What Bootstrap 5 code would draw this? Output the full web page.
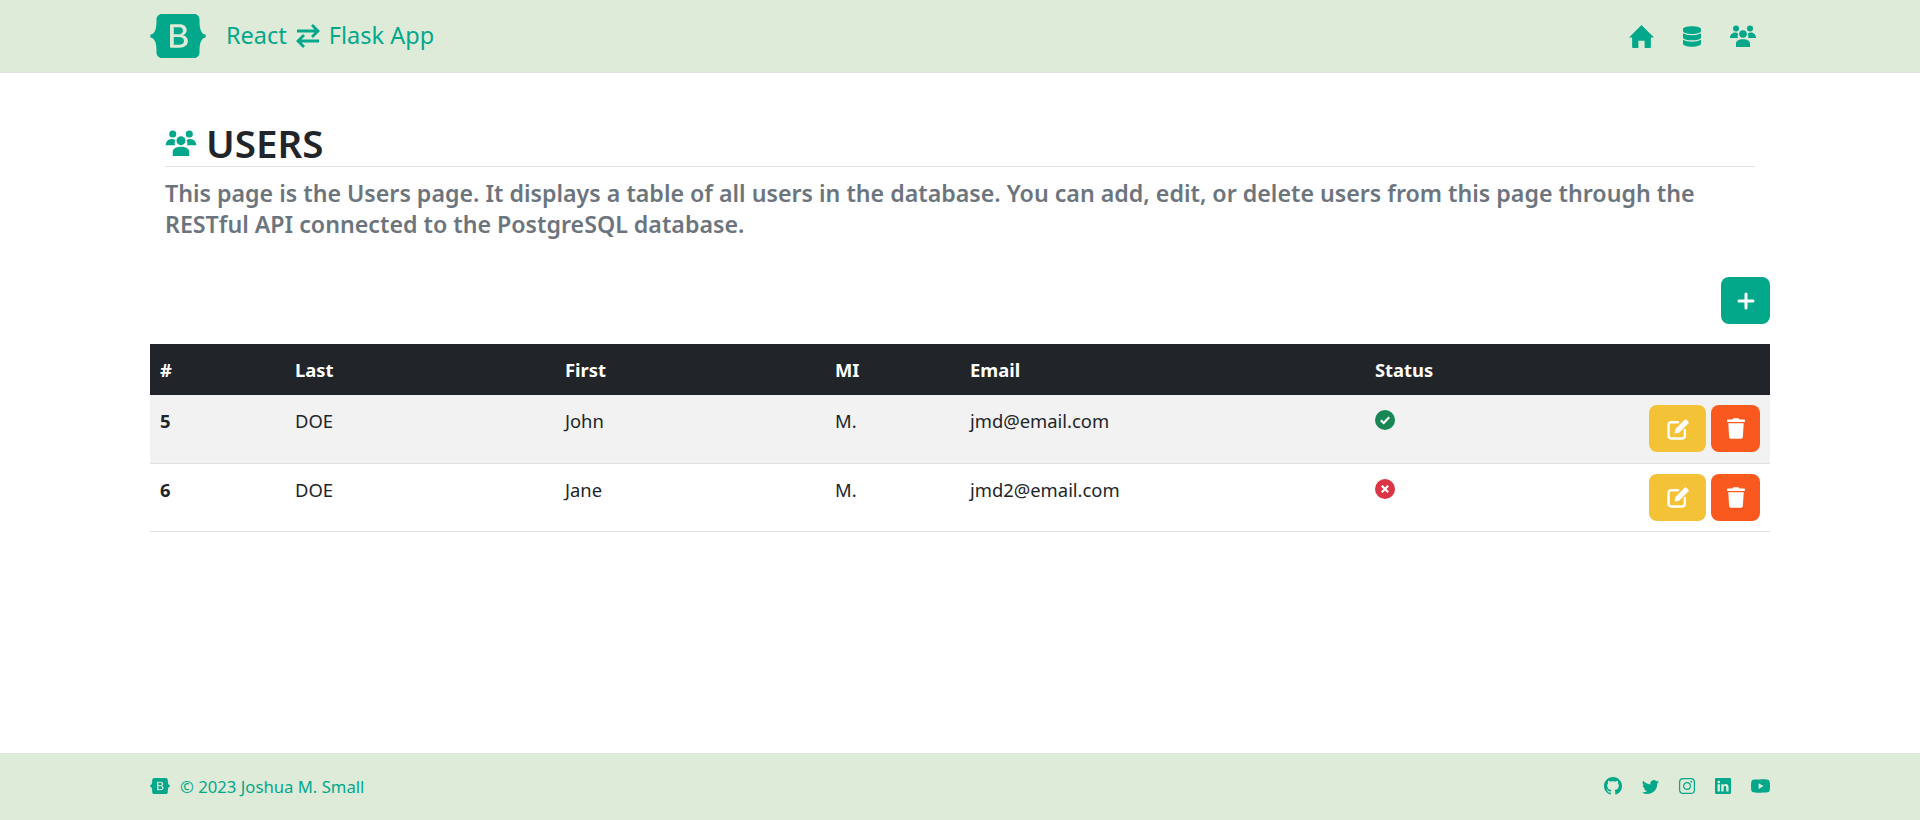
<!DOCTYPE html>
<html lang="en">
<head>
    <meta charset="UTF-8">
    <meta name="viewport" content="width=device-width, initial-scale=1.0">
    <title>React Flask App</title>
    <link href="https://cdn.jsdelivr.net/npm/bootstrap@5.3.0/dist/css/bootstrap.min.css" rel="stylesheet">
    <style>
        body {
            font-family: "Noto Sans", "Open Sans", sans-serif;
            color: #212529;
            min-height: 820px;
            display: flex;
            flex-direction: column;
        }
        .page-wrap {
            width: 1620px;
            margin: 0 auto;
        }
        .top-bar {
            background-color: #deebd9;
            border-bottom: 1px solid #dee2e6;
            height: 73px;
            padding: 0;
        }
        .brand-link {
            color: #03a88a;
            font-size: 23.5px;
            font-weight: 400;
            text-decoration: none;
            gap: 20px;
        }
        .brand-link:hover { color: #03a88a; }
        .brand-link svg.logo { width: 56px; height: 44px; }
        .swap-icon { width: 26px; height: 26px; margin: 0 8px; vertical-align: -5px; }
        .nav-icons { gap: 29px; padding-right: 14px; }
        .nav-icons a { color: #03a88a; display: block; line-height: 0; }
        .nav-ico-home { width: 25px; height: 23px; }
        .nav-ico-db { width: 18px; height: 21px; }
        .nav-ico-people { width: 26px; height: 22px; }
        .intro-block { padding: 47px 15px 0; }
        .users-title {
            font-size: 38.5px;
            font-weight: 600;
            line-height: 1.2;
            margin: 0;
            padding-bottom: 0;
            border-bottom: 1px solid #dee2e6;
            gap: 9px;
        }
        .users-title svg { width: 32px; height: 26px; color: #03a88a; }
        .intro-text {
            font-size: 23.2px;
            font-weight: 600;
            line-height: 31px;
            color: #6c757d;
            margin: 11px 0 0;
        }
        .add-row { margin-top: 37px; margin-bottom: 20px; }
        .icon-btn {
            border: 0;
            border-radius: 8px;
            height: 47px;
            color: #fff;
            padding: 0;
            display: inline-flex;
            align-items: center;
            justify-content: center;
        }
        .btn-add { background-color: #03a88a; width: 49px; }
        .btn-add svg { width: 20px; height: 20px; }
        .btn-edit { background-color: #f3c236; width: 57px; }
        .btn-edit svg { width: 22px; height: 22px; }
        .btn-del { background-color: #f9591f; width: 49px; }
        .btn-del svg { width: 18px; height: 21px; }
        .action-btns { gap: 5px; }
        .users-table { table-layout: fixed; margin: 0; }
        .users-table th, .users-table td { padding: 12px 10px 10px; font-size: 18.4px; line-height: 27px; }
        .users-table thead th {
            background-color: #212529;
            color: #fff;
            font-weight: 700;
            height: 51px;
            padding: 0 10px;
            border: 0;
            vertical-align: middle;
        }
        .users-table tbody tr.shade > * { background-color: #f2f2f2; }
        .users-table tbody td, .users-table tbody th { height: 68px; vertical-align: top; border-color: #dee2e6; }
        .users-table tbody th { font-weight: 700; }
        .users-table tbody td.status-cell { padding-top: 10px; }
        .status-ico { width: 20px; height: 20px; display: block; margin-top: 5px; }
        .site-foot {
            background-color: #deebd9;
            height: 67px;
            margin-top: auto;
            color: #03a88a;
            font-size: 16.7px;
        }
        .site-foot svg.logo { width: 20px; height: 16px; }
        .foot-brand { gap: 10px; }
        .foot-links { gap: 20px; }
        .foot-links a { color: #03a88a; line-height: 0; display: block; }
        .ico-gh { width: 18px; height: 18px; }
        .ico-tw { width: 17px; height: 17px; }
        .ico-ig, .ico-li { width: 16px; height: 16px; }
        .ico-yt { width: 19px; height: 19px; }
    </style>
</head>
<body>
    <svg width="0" height="0" class="d-none">
        <symbol id="bs-logo" viewBox="0 0 118 94"><path fill="currentColor" fill-rule="evenodd" d="M24.509 0c-6.733 0-11.715 5.893-11.492 12.284.214 6.14-.064 14.092-2.066 20.577C8.943 39.365 5.547 43.485 0 44.014v5.972c5.547.529 8.943 4.649 10.951 11.153 2.002 6.485 2.28 14.437 2.066 20.577C12.794 88.106 17.776 94 24.51 94H93.5c6.733 0 11.714-5.893 11.491-12.284-.214-6.14.064-14.092 2.066-20.577 2.009-6.504 5.396-10.624 10.943-11.153v-5.972c-5.547-.529-8.934-4.649-10.943-11.153-2.002-6.484-2.28-14.437-2.066-20.577C105.214 5.894 100.233 0 93.5 0H24.508zM80 57.863C80 66.663 73.436 72 62.543 72H44a2 2 0 01-2-2V24a2 2 0 012-2h18.437c9.083 0 15.044 4.92 15.044 12.474 0 5.302-4.01 10.049-9.119 10.88v.277C75.317 46.394 80 51.21 80 57.863zM60.521 28.34H49.948v14.934h8.905c6.884 0 10.68-2.772 10.68-7.727 0-4.643-3.264-7.207-8.012-7.207zM49.948 49.2v16.458H60.91c7.167 0 10.964-2.876 10.964-8.281 0-5.406-3.903-8.178-11.425-8.178H49.948z"/></symbol>
        <symbol id="people" viewBox="0 0 26 22"><g fill="currentColor"><circle cx="6" cy="3.4" r="3"/><circle cx="20" cy="3.4" r="3"/><circle cx="13" cy="9" r="3.8"/><path d="M0 13c0-3 2.4-5.4 5-5.4 1.300 0 2.400.4 3.300 1.200-.5.900-.8 1.900-.7 3 .1.500.2.900.4 1.200H0zM26 13c0-3-2.400-5.400-5-5.400-1.300 0-2.400.4-3.300 1.200.5.900.8 1.900.7 3-.1.500-.2.900-.4 1.200H26zM6 22v-3.500c0-2.500 2.500-4.300 7-4.300s7 1.800 7 4.300V22H6z"/></g></symbol>
        <symbol id="pen-box" viewBox="0 0 21 21"><path fill="none" stroke="currentColor" stroke-width="2.300" stroke-linecap="round" d="M10.500 4H4a2.500 2.500 0 0 0-2.500 2.500V17A2.500 2.500 0 0 0 4 19.500h10.500A2.500 2.500 0 0 0 17 17v-5.500"/><path fill="currentColor" d="M7.200 14.800l.8-4.300L16.600 1.900a1.700 1.700 0 0 1 2.400 0l1.100 1.100a1.700 1.700 0 0 1 0 2.400L11.500 14z"/></symbol>
        <symbol id="bin" viewBox="0 0 448 512"><path fill="currentColor" d="M432 32H312l-9.400-18.700A24 24 0 0 0 281.100 0H166.800a23.720 23.720 0 0 0-21.400 13.300L136 32H16A16 16 0 0 0 0 48v32a16 16 0 0 0 16 16h416a16 16 0 0 0 16-16V48a16 16 0 0 0-16-16zM53.200 467a48 48 0 0 0 47.900 45h245.800a48 48 0 0 0 47.900-45L416 128H32z"/></symbol>
    </svg>

    <!-- Header -->
    <nav class="navbar top-bar">
        <div class="page-wrap d-flex align-items-center justify-content-between">
            <a class="brand-link d-flex align-items-center" href="#">
                <svg class="logo"><use href="#bs-logo"/></svg>
                <span>React<svg class="swap-icon" viewBox="0 0 26 26" fill="none" stroke="currentColor" stroke-width="2.800"><path d="M2 8h21M17 2l6 6-6 6M24 18H3M9 12l-6 6 6 6"/></svg>Flask App</span>
            </a>
            <div class="nav-icons d-flex align-items-center">
                <a href="#"><svg class="nav-ico-home" viewBox="0 0 24 22"><path fill="currentColor" d="M12 0 24 12h-3v9a1 1 0 0 1-1 1h-5v-7H9v7H4a1 1 0 0 1-1-1v-9H0z"/></svg></a>
                <a href="#"><svg class="nav-ico-db" viewBox="0 0 448 512"><path fill="currentColor" d="M448 73.143v45.714C448 159.143 347.667 192 224 192S0 159.143 0 118.857V73.143C0 32.857 100.333 0 224 0s224 32.857 224 73.143zM448 176v102.857C448 319.143 347.667 352 224 352S0 319.143 0 278.857V176c48.125 33.143 136.208 48.572 224 48.572S399.874 209.143 448 176zm0 160v102.857C448 479.143 347.667 512 224 512S0 479.143 0 438.857V336c48.125 33.143 136.208 48.572 224 48.572S399.874 369.143 448 336z"/></svg></a>
                <a href="#"><svg class="nav-ico-people"><use href="#people"/></svg></a>
            </div>
        </div>
    </nav>

    <main class="page-wrap">
        <section class="intro-block">
            <h1 class="users-title d-flex align-items-center"><svg><use href="#people"/></svg>USERS</h1>
            <p class="intro-text">This page is the Users page. It displays a table of all users in the database. You can add, edit, or delete users from this page through the RESTful API connected to the PostgreSQL database.</p>
        </section>

        <div class="add-row d-flex justify-content-end">
            <button class="icon-btn btn-add" type="button" aria-label="Add"><svg viewBox="0 0 20 20" fill="none" stroke="currentColor" stroke-width="3" stroke-linecap="round"><path d="M10 3v14M3 10h14"/></svg></button>
        </div>

        <table class="table users-table">
            <thead>
                <tr>
                    <th class="col-1">#</th>
                    <th class="col-2">Last</th>
                    <th class="col-2">First</th>
                    <th class="col-1">MI</th>
                    <th class="col-3">Email</th>
                    <th class="col-3">Status</th>
                </tr>
            </thead>
            <tbody>
                <tr class="shade">
                    <th>5</th>
                    <td>DOE</td>
                    <td>John</td>
                    <td>M.</td>
                    <td>jmd@email.com</td>
                    <td class="status-cell">
                        <div class="d-flex justify-content-between">
                            <svg class="status-ico" viewBox="0 0 20 20"><circle cx="10" cy="10" r="10" fill="#198754"/><path d="M5.800 10.300l2.900 2.700 5.500-5.800" fill="none" stroke="#fff" stroke-width="2.200"/></svg>
                            <div class="action-btns d-flex">
                                <button class="icon-btn btn-edit" type="button" aria-label="Edit"><svg><use href="#pen-box"/></svg></button>
                                <button class="icon-btn btn-del" type="button" aria-label="Delete"><svg><use href="#bin"/></svg></button>
                            </div>
                        </div>
                    </td>
                </tr>
                <tr>
                    <th>6</th>
                    <td>DOE</td>
                    <td>Jane</td>
                    <td>M.</td>
                    <td>jmd2@email.com</td>
                    <td class="status-cell">
                        <div class="d-flex justify-content-between">
                            <svg class="status-ico" viewBox="0 0 20 20"><circle cx="10" cy="10" r="10" fill="#dc3545"/><path d="M6.800 6.800l6.400 6.400M13.200 6.800l-6.400 6.400" fill="none" stroke="#fff" stroke-width="2.200"/></svg>
                            <div class="action-btns d-flex">
                                <button class="icon-btn btn-edit" type="button" aria-label="Edit"><svg><use href="#pen-box"/></svg></button>
                                <button class="icon-btn btn-del" type="button" aria-label="Delete"><svg><use href="#bin"/></svg></button>
                            </div>
                        </div>
                    </td>
                </tr>
            </tbody>
        </table>
    </main>

    <!-- Footer -->
    <footer class="site-foot d-flex align-items-center">
        <div class="page-wrap d-flex align-items-center justify-content-between">
            <div class="foot-brand d-flex align-items-center">
                <svg class="logo"><use href="#bs-logo"/></svg>
                <span>© 2023 Joshua M. Small</span>
            </div>
            <div class="foot-links d-flex align-items-center">
                <a href="#"><svg class="ico-gh" viewBox="0 0 16 16"><path fill="currentColor" d="M8 0C3.580 0 0 3.580 0 8c0 3.540 2.290 6.530 5.470 7.590.4.070.55-.17.55-.38 0-.19-.01-.82-.01-1.490-2.010.37-2.530-.49-2.690-.94-.09-.23-.48-.94-.82-1.130-.28-.15-.68-.52-.01-.53.63-.01 1.080.58 1.230.82.72 1.210 1.870.87 2.330.66.07-.52.28-.87.51-1.070-1.780-.2-3.640-.89-3.640-3.950 0-.87.31-1.590.82-2.150-.08-.2-.36-1.020.08-2.120 0 0 .67-.21 2.200.82.64-.18 1.320-.27 2-.27.68 0 1.360.09 2 .27 1.530-1.040 2.200-.82 2.200-.82.44 1.100.16 1.920.08 2.120.51.56.82 1.270.82 2.150 0 3.070-1.870 3.750-3.650 3.950.29.25.54.73.54 1.480 0 1.070-.01 1.930-.01 2.200 0 .21.15.46.55.38A8.012 8.012 0 0 0 16 8c0-4.420-3.580-8-8-8z"/></svg></a>
                <a href="#"><svg class="ico-tw" viewBox="0 0 16 16"><path fill="currentColor" d="M5.026 15c6.038 0 9.341-5.003 9.341-9.334 0-.14 0-.282-.006-.422A6.685 6.685 0 0 0 16 3.542a6.658 6.658 0 0 1-1.889.518 3.301 3.301 0 0 0 1.447-1.817 6.533 6.533 0 0 1-2.087.793A3.286 3.286 0 0 0 7.875 6.030a9.325 9.325 0 0 1-6.767-3.429 3.289 3.289 0 0 0 1.018 4.382A3.323 3.323 0 0 1 .64 6.575v.045a3.288 3.288 0 0 0 2.632 3.218 3.203 3.203 0 0 1-.865.115 3.230 3.230 0 0 1-.614-.057 3.283 3.283 0 0 0 3.067 2.277A6.588 6.588 0 0 1 .78 13.580a6.320 6.320 0 0 1-.78-.045A9.344 9.344 0 0 0 5.026 15z"/></svg></a>
                <a href="#"><svg class="ico-ig" viewBox="0 0 16 16" fill="none" stroke="currentColor"><rect x=".6" y=".6" width="14.800" height="14.800" rx="3.500" stroke-width="1.200"/><circle cx="8" cy="8" r="3.400" stroke-width="1.200"/><circle cx="12.300" cy="3.700" r=".9" fill="currentColor" stroke="none"/></svg></a>
                <a href="#"><svg class="ico-li" viewBox="0 0 16 16"><path fill="currentColor" d="M0 1.146C0 .513.526 0 1.175 0h13.650C15.474 0 16 .513 16 1.146v13.708c0 .633-.526 1.146-1.175 1.146H1.175C.526 16 0 15.487 0 14.854V1.146zm4.943 12.248V6.169H2.542v7.225h2.401zm-1.200-8.212c.837 0 1.358-.554 1.358-1.248-.015-.709-.52-1.248-1.342-1.248-.822 0-1.359.54-1.359 1.248 0 .694.521 1.248 1.327 1.248h.016zm4.908 8.212V9.359c0-.216.016-.432.08-.586.173-.431.568-.878 1.232-.878.869 0 1.216.662 1.216 1.634v3.865h2.401V9.250c0-2.220-1.184-3.252-2.764-3.252-1.274 0-1.845.7-2.165 1.193v.025h-.016a5.540 5.540 0 0 1 .016-.025V6.169h-2.400c.03.678 0 7.225 0 7.225h2.400z"/></svg></a>
                <a href="#"><svg class="ico-yt" viewBox="0 0 16 16"><path fill="currentColor" d="M8.051 1.999h.089c.822.003 4.987.033 6.110.335a2.010 2.010 0 0 1 1.415 1.420c.101.38.172.883.22 1.402l.01.104.022.26.008.104c.065.914.073 1.770.074 1.957v.075c-.001.194-.01 1.108-.082 2.060l-.008.105-.009.104c-.05.572-.124 1.140-.235 1.558a2.007 2.007 0 0 1-1.415 1.420c-1.160.312-5.569.334-6.180.335h-.142c-.309 0-1.587-.006-2.927-.052l-.17-.006-.087-.004-.171-.007-.171-.007c-1.110-.049-2.167-.128-2.654-.26a2.007 2.007 0 0 1-1.415-1.419c-.111-.417-.185-.986-.235-1.558L.09 9.820l-.008-.104A31.400 31.400 0 0 1 0 7.680v-.123c.002-.215.01-.958.064-1.778l.007-.103.003-.052.008-.104.022-.26.01-.104c.048-.519.119-1.023.22-1.402a2.007 2.007 0 0 1 1.415-1.420c.487-.13 1.544-.21 2.654-.26l.17-.007.172-.006.086-.003.171-.007A99.788 99.788 0 0 1 7.858 2h.193zM6.400 5.209v4.818l4.157-2.408L6.400 5.209z"/></svg></a>
            </div>
        </div>
    </footer>
</body>
</html>
